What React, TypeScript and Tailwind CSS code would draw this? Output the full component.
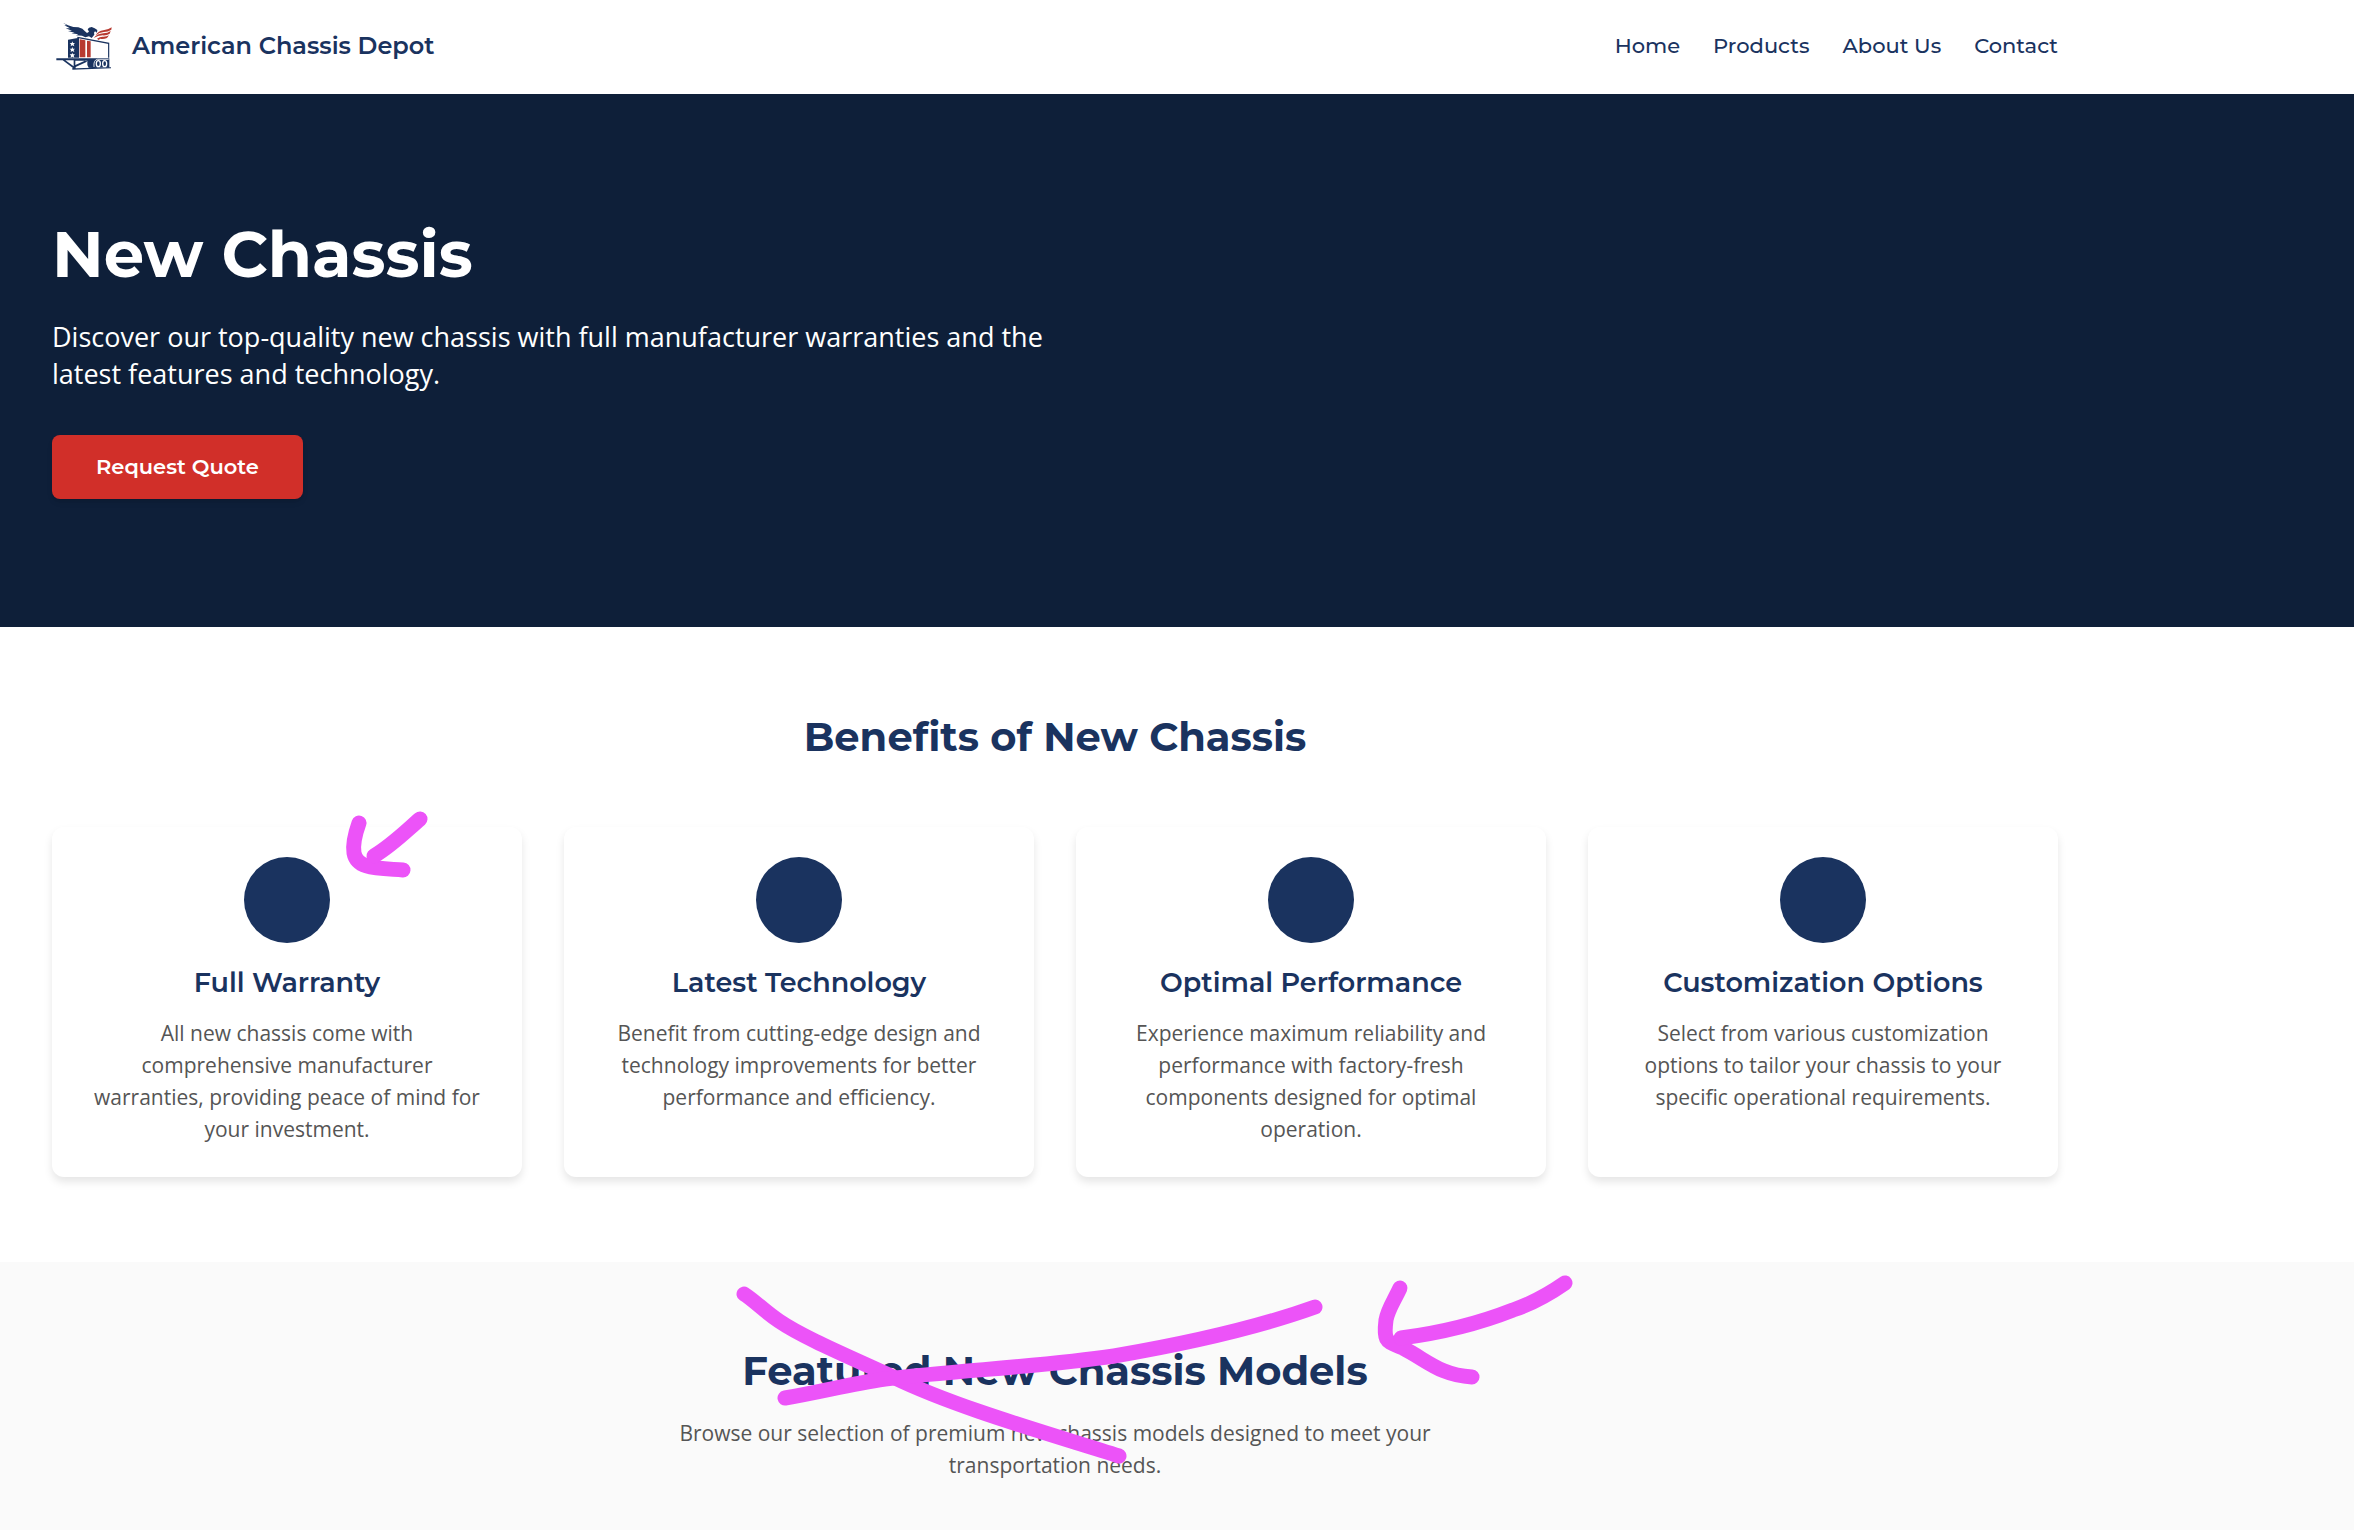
const navLinks = ["Home", "Products", "About Us", "Contact"];

const benefits = [
  {
    title: "Full Warranty",
    text: "All new chassis come with comprehensive manufacturer warranties, providing peace of mind for your investment.",
  },
  {
    title: "Latest Technology",
    text: "Benefit from cutting-edge design and technology improvements for better performance and efficiency.",
  },
  {
    title: "Optimal Performance",
    text: "Experience maximum reliability and performance with factory-fresh components designed for optimal operation.",
  },
  {
    title: "Customization Options",
    text: "Select from various customization options to tailor your chassis to your specific operational requirements.",
  },
];

const display = "font-['Montserrat','Inter',sans-serif]";

function Logo() {
  return (
    <svg viewBox="36 15 192 192" className="size-16" aria-hidden="true">
      {/* eagle */}
      <path
        d="M69 41 L84 49 L100 54 L115 55 L127 59 L135 67 L141 72 L147 68 L143 61 L147 56 L155 54 L164 58 L172 63 L171 71 L165 67 L162 71 L163 77 L155 87 L147 82 L136 85 L126 80 L108 79 L115 76 L94 73 L104 71 L84 66 L96 65 L77 58 L90 58 L73 49 L80 49 Z"
        fill="#1a335f"
      />
      <path
        d="M167 79 Q175 66 190 64 Q204 63 215 55 L214 62 Q205 69 191 69 Q178 70 167 79 Z M161 87 Q172 74 190 73 Q203 73 212 66 L209 74 Q200 80 188 79 Q174 79 161 87 Z M171 89 Q180 82 190 83 Q201 83 207 79 L201 87 Q190 91 181 89 L176 93 Z"
        fill="#b83a30"
      />
      {/* container */}
      <path d="M84 92 L117 86 V146 H84 Z" fill="#1a335f" />
      <path d="M119 91 L136 94 V145 H119 Z M141 95 L152 97 V145 H141 Z" fill="#b83a30" />
      <path d="M112 85 L206 103 V146" fill="none" stroke="#1a335f" strokeWidth="3.5" />
      <g fill="#fff">
        <path d="M97 97 l2 5 6 0 -4 4 2 6 -6 -3 -5 3 1 -6 -4 -4 6 0 Z" />
        <path d="M97 114 l2 5 6 0 -4 4 2 6 -6 -3 -5 3 1 -6 -4 -4 6 0 Z" />
        <path d="M97 131 l2 5 6 0 -4 4 2 6 -6 -3 -5 3 1 -6 -4 -4 6 0 Z" />
      </g>
      {/* chassis and wheels */}
      <path
        d="M49 148 H208 V176 H146 L142 168 L142 155 H106 V168 L138 154 L141 158 L107 174 V178 L213 175 V178 L97 182 V177 H99 L68 154 H49 Z M76 154 L101 172 V154 Z"
        fill="#1a335f"
        fillRule="evenodd"
      />
      <path d="M162 174 Q160 153 172 151 H206" fill="none" stroke="#fff" strokeWidth="2.5" />
      <g fill="none" stroke="#fff" strokeWidth="4">
        <ellipse cx="175" cy="164" rx="6" ry="9" />
        <ellipse cx="194" cy="164" rx="6" ry="9" />
      </g>
    </svg>
  );
}

function CardArrow() {
  return (
    <svg
      viewBox="340 800 100 90"
      className="pointer-events-none absolute -top-[26px] left-72 h-[90px] w-[100px]"
      fill="none"
      stroke="#ec53f8"
      strokeWidth="15"
      strokeLinecap="round"
      strokeLinejoin="round"
      aria-hidden="true"
    >
      <path d="M359 822 C354 836 353 846 354 852 C357 868 376 867 403 869" />
      <path d="M420 818 C404 832 391 845 374 855" />
    </svg>
  );
}

function FeaturedMarks() {
  return (
    <svg
      viewBox="728 1272 860 204"
      className="pointer-events-none absolute top-2.5 left-[728px] h-[204px] w-[860px]"
      fill="none"
      stroke="#ec53f8"
      strokeWidth="15"
      strokeLinecap="round"
      strokeLinejoin="round"
      aria-hidden="true"
    >
      <path d="M744 1294 C755 1301 764 1311 779 1321 C804 1338 850 1357 893 1377 C955 1407 1040 1431 1119 1456" />
      <path d="M785 1398 C825 1391 850 1384 885 1379 C960 1370 1040 1367 1114 1356 C1190 1343 1262 1326 1315 1307" />
      <path d="M1400 1288 C1394 1301 1388 1309 1386 1320 C1383 1344 1388 1341 1403 1348 C1428 1361 1440 1375 1472 1377" />
      <path d="M1565 1283 C1542 1299 1525 1306 1513 1310 C1480 1323 1440 1333 1401 1338" />
    </svg>
  );
}

export default function App() {
  return (
    <div className="min-h-screen bg-[#fafafa] font-['Open_Sans',sans-serif] text-[21px] leading-8 text-[#555]">
      <header className="bg-white">
        <div className="flex max-w-[2110px] items-center justify-between px-[52px] pt-3.5 pb-4">
          <a href="#" className="flex items-center gap-4 text-[#1a335f]">
            <Logo />
            <span className={`${display} text-[24px] leading-8 font-semibold`}>American Chassis Depot</span>
          </a>
          <nav className={`${display} flex gap-[33px] text-[21px] font-medium text-[#1a335f]`}>
            {navLinks.map((label) => (
              <a key={label} href="#">
                {label}
              </a>
            ))}
          </nav>
        </div>
      </header>

      <section className="bg-[#0e1f39] text-white">
        <div className="max-w-[2110px] px-[52px] py-32">
          <h1 className={`${display} mb-8 text-[64px] leading-16 font-bold`}>New Chassis</h1>
          <p className="mb-[43px] max-w-[1024px] text-[27px] leading-[37px]">
            Discover our top-quality new chassis with full manufacturer warranties and the latest
            features and technology.
          </p>
          <button
            type="button"
            className={`${display} h-16 rounded-lg bg-[#d12f29] px-11 text-[21px] font-semibold shadow-md`}
          >
            Request Quote
          </button>
        </div>
      </section>

      <section className="bg-white">
        <div className="max-w-[2110px] px-[52px] pt-21 pb-[85px]">
          <h2
            className={`${display} mb-[65px] text-center text-[40px] leading-[51px] font-bold text-[#1a335f]`}
          >
            Benefits of New Chassis
          </h2>
          <div className="grid grid-cols-4 gap-[42px]">
            {benefits.map((benefit, index) => (
              <article
                key={benefit.title}
                className="relative rounded-xl bg-white px-8 pt-[30px] pb-8 text-center shadow-[0_5px_8px_rgba(0,0,0,0.1)]"
              >
                <div className="mx-auto mb-6 size-[86px] rounded-full bg-[#1a335f]" />
                <h3 className={`${display} mb-[18px] text-[27px] leading-8 font-semibold text-[#1a335f]`}>
                  {benefit.title}
                </h3>
                <p>{benefit.text}</p>
                {index === 0 && <CardArrow />}
              </article>
            ))}
          </div>
        </div>
      </section>

      <section>
        <div className="relative max-w-[2110px] px-[52px] pt-[83px] pb-8 text-center">
          <h2
            className={`${display} mb-[21px] text-[40px] leading-[51px] font-bold text-[#1a335f]`}
          >
            Featured New Chassis Models
          </h2>
          <p className="mx-auto max-w-[880px]">
            Browse our selection of premium new chassis models designed to meet your transportation
            needs.
          </p>
          <FeaturedMarks />
        </div>
      </section>
    </div>
  );
}
